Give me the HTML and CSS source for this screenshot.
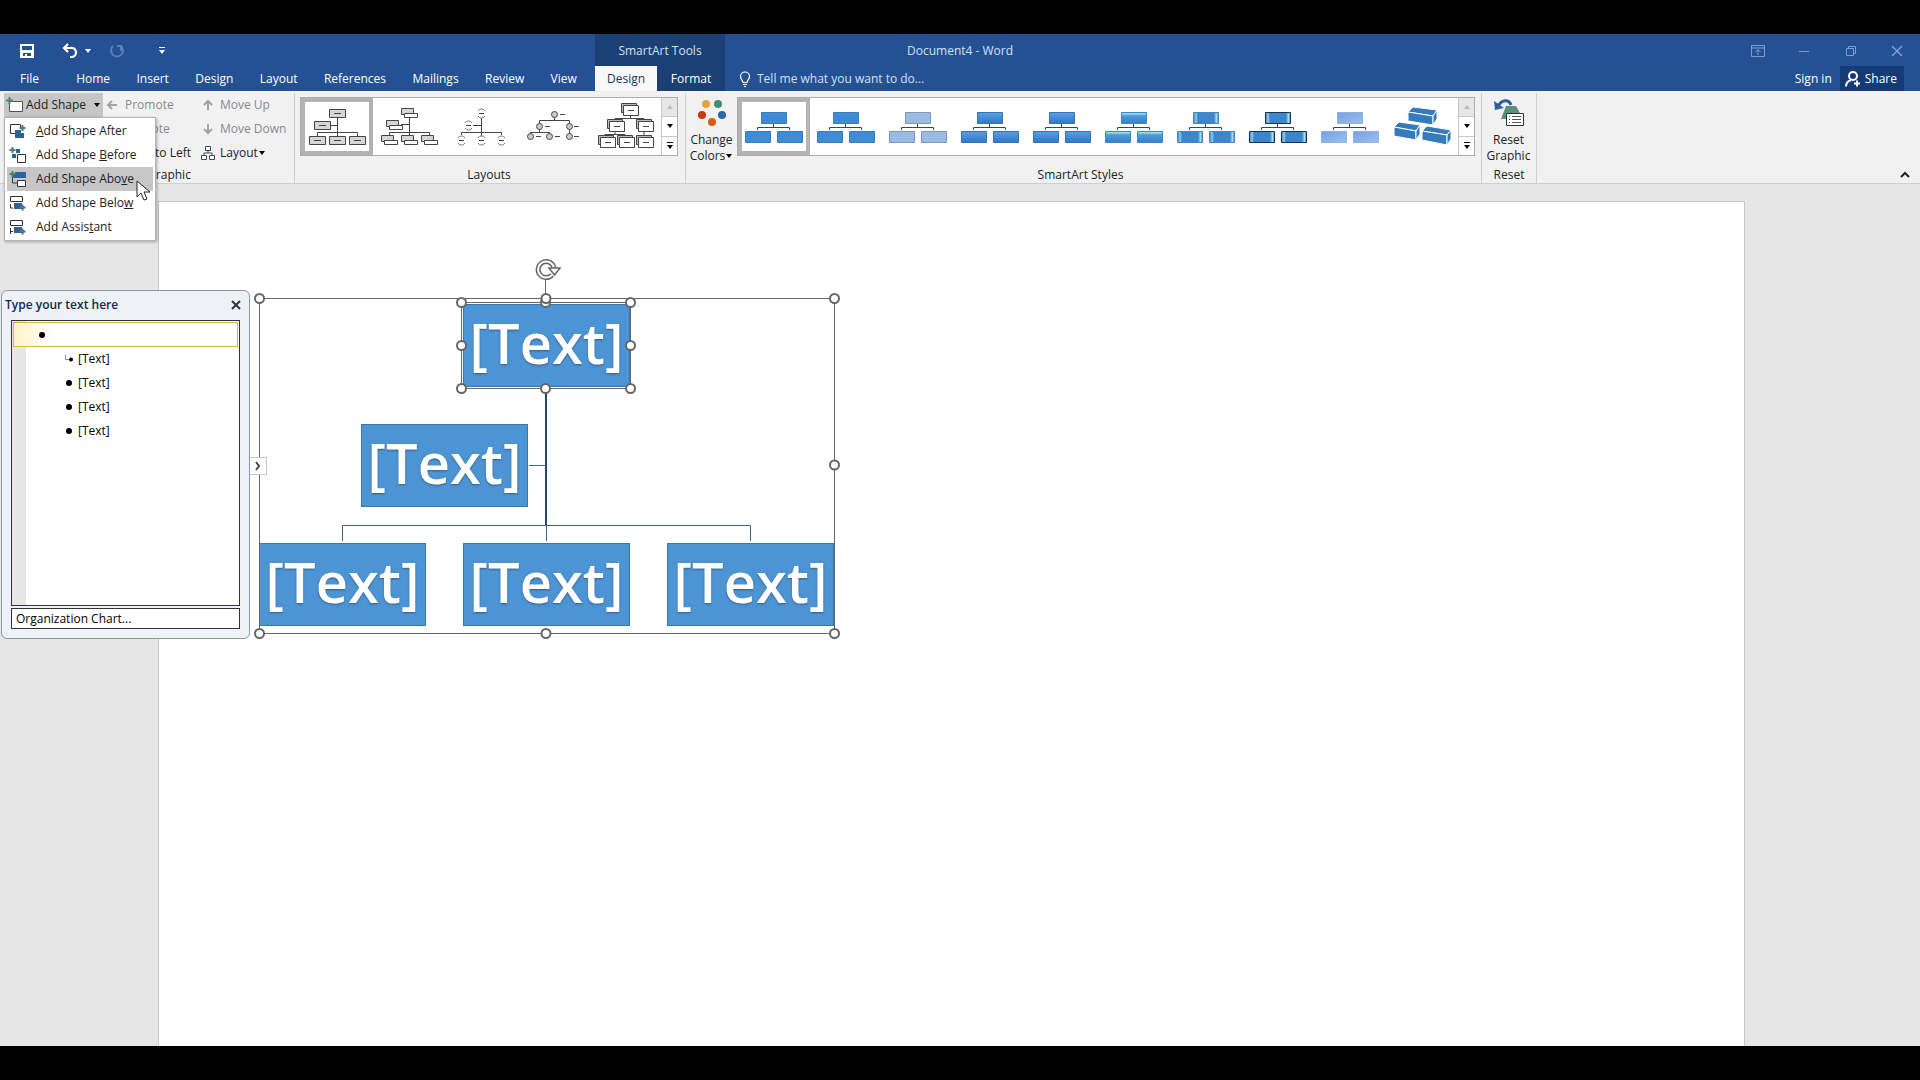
FILE: index.html
```html
<!DOCTYPE html>
<html lang="en">
<head>
<meta charset="UTF-8" />
<meta name="viewport" content="width=device-width, initial-scale=1" />
<title>Document4 - Word</title>
<link rel="stylesheet" href="styles.css">
</head>
<body>

<!-- Shared drawings -->
<svg class="defs" aria-hidden="true">
  <defs>
    <linearGradient id="blueGrad" x1="0" y1="0" x2="0" y2="1"><stop offset="0" stop-color="#5aa0e4"/><stop offset="1" stop-color="#2f78c6"/></linearGradient>
    <linearGradient id="glossGrad" x1="0" y1="0" x2="0" y2="1"><stop offset="0" stop-color="#2f86c8"/><stop offset=".1" stop-color="#a4e0f8"/><stop offset=".3" stop-color="#4b9bdc"/><stop offset="1" stop-color="#3880c8"/></linearGradient>
    <linearGradient id="insetGrad"><stop offset="0" stop-color="#3278b8"/><stop offset=".1" stop-color="#93cdf1"/><stop offset=".18" stop-color="#3b86cd"/><stop offset=".82" stop-color="#3b86cd"/><stop offset=".92" stop-color="#a5dcf8"/><stop offset="1" stop-color="#3278b8"/></linearGradient>
    <linearGradient id="softGrad" x1="0" y1="0" x2="1" y2="1"><stop offset="0" stop-color="#78a2dc"/><stop offset="1" stop-color="#9dbdf0"/></linearGradient>
    <symbol id="chart" viewBox="0 0 72 56">
      <path d="M35.500 26v3.500M19.500 32v-2.500h32v2.500" fill="none" stroke="#33475c"/>
      <path d="M23.500 14.500h25v11h-25z"/><path d="M7.500 33.500h25v11h-25z"/><path d="M39.500 33.500h25v11h-25z"/>
    </symbol>
    <symbol id="up" viewBox="0 0 8 8"><path d="M1 6h6L4 2z"/></symbol>
    <symbol id="down" viewBox="0 0 8 8"><path d="M1 2h6L4 6z"/></symbol>
    <symbol id="more" viewBox="0 0 8 8"><path d="M1 0h6v1H1zM1 3h6L4 7z"/></symbol>
  </defs>
</svg>

<header class="titlebar">
  <div class="quick">
    <button class="save" aria-label="Save"><svg width="16" height="16" viewBox="0 0 16 16"><path d="M1 1h14v14H1zM3 3v4h10V3zM4 10v3h2v-2h2v2h4v-3z" fill="#fff" fill-rule="evenodd"/></svg></button>
    <button class="undo" aria-label="Undo"><svg width="16" height="16" viewBox="0 0 16 16"><path d="M6 1L2 5l4 4M2 5h7a4.500 4.500 0 0 1 1 9H8" fill="none" stroke="#fff" stroke-width="2.200"/></svg><svg width="8" height="8" fill="#fff"><use href="#down"/></svg></button>
    <button class="redo" aria-label="Repeat"><svg width="16" height="16" viewBox="0 0 16 16"><path d="M4 3a6 6 0 1 0 8 0M12 8V3h-4" fill="none" stroke="#5c7fb8" stroke-width="2"/></svg></button>
    <button class="customize" aria-label="Customize"><svg width="8" height="8" fill="#fff"><use href="#more"/></svg></button>
  </div>
  <div class="context">SmartArt Tools</div>
  <h1>Document4 - Word</h1>
  <div class="window-buttons">
    <button aria-label="Ribbon options"><svg width="14" height="12" viewBox="0 0 14 12"><path d="M.5.5h13v11H.5zM.5 3h13M7 10V5M4.500 7L7 4.500 9.500 7"/></svg></button>
    <button aria-label="Minimize"><svg width="14" height="12" viewBox="0 0 14 12"><path d="M2 6.500h10"/></svg></button>
    <button aria-label="Restore"><svg width="14" height="12" viewBox="0 0 14 12"><path d="M2.500 3.500h7v7h-7zM4.500 3V1.500h7v7H10"/></svg></button>
    <button aria-label="Close"><svg width="14" height="12" viewBox="0 0 14 12"><path d="M2 1l10 10M12 1L2 11" stroke-width="1.500"/></svg></button>
  </div>
</header>

<nav class="tabs">
  <div class="main-tabs">
    <button class="tab file">File</button>
    <button class="tab">Home</button>
    <button class="tab">Insert</button>
    <button class="tab">Design</button>
    <button class="tab">Layout</button>
    <button class="tab">References</button>
    <button class="tab">Mailings</button>
    <button class="tab">Review</button>
    <button class="tab">View</button>
  </div>
  <div class="context-tabs">
    <button class="tab active">Design</button>
    <button class="tab">Format</button>
  </div>
  <label class="tell">
    <svg width="12" height="16" viewBox="0 0 12 16"><path d="M4 11.500c0-2-2.500-3-2.500-6a4.500 4.500 0 0 1 9 0c0 3-2.500 4-2.500 6zM4 13.500h4M5 15.500h2" fill="none" stroke="#fff" stroke-width="1.200"/></svg>
    <input type="text" placeholder="Tell me what you want to do..." aria-label="Tell me what you want to do">
  </label>
  <a class="signin" href="#">Sign in</a>
  <button class="share"><svg width="16" height="16" viewBox="0 0 16 16"><circle cx="8" cy="5" r="4"/><path d="M1 15.500c0-4 2-5.500 5-6.500M12 9.500v6M9 12.500h6"/></svg>Share</button>
</nav>

<section class="ribbon">
  <div class="group create">
    <div class="group-body create-grid">
      <div class="dropdown">
        <button class="cmd add-shape"><svg width="18" height="16" viewBox="0 0 18 16"><path d="M3.500 4.500h13v10h-13z" fill="#fff" stroke="#555"/><path d="M3.500 0v7M0 3.500h7" stroke="#4a8a73" stroke-width="2"/></svg><span>Add Shape</span><svg class="caret" width="8" height="8"><use href="#down"/></svg></button>
        <ul class="menu">
          <li><button><svg width="18" height="16" viewBox="0 0 18 16"><path d="M8 10.500H1.500v-9h10V6" fill="none" stroke="#333"/><path d="M6 7h6v3h3v5H6z" fill="#2e6399"/><path d="M13.500 2v6M10.500 5h6" stroke="#4a7f80" stroke-width="2"/></svg><span><u>A</u>dd Shape After</span></button></li>
          <li><button><svg width="18" height="16" viewBox="0 0 18 16"><path d="M7 2h4v4H7zM3 7h4v4H3z" fill="#2e6399"/><path d="M8.500 7.500h8v8h-8z" fill="#fff" stroke="#333"/><path d="M3.500 0v6M.5 3h6" stroke="#4a7f80" stroke-width="2"/></svg><span>Add Shape <u>B</u>efore</span></button></li>
          <li><button class="hover"><svg width="18" height="16" viewBox="0 0 18 16"><path d="M6 1h11v6H3V4h3z" fill="#2e6399"/><path d="M3.500 7v5H8" fill="none" stroke="#333"/><path d="M8.500 9.500h8v6h-8z" fill="#fff" stroke="#333"/><path d="M3.500 0v6M.5 3h6" stroke="#4a7f80" stroke-width="2"/></svg><span>Add Shape Abo<u>v</u>e</span></button></li>
          <li><button><svg width="18" height="16" viewBox="0 0 18 16"><path d="M1.500 1.500h12v5h-12zM1.500 9v4H4" fill="#fff" stroke="#333"/><path d="M5 8h8v3h2v3H5z" fill="#2e6399"/><path d="M13.500 9.500v6M10.500 12.500h6" stroke="#4a7f80" stroke-width="2"/></svg><span>Add Shape Belo<u>w</u></span></button></li>
          <li><button><svg width="18" height="16" viewBox="0 0 18 16"><path d="M1.500 1.500h12v5h-12zM1.500 9v6M1.500 12.500H4" fill="#fff" stroke="#333"/><path d="M5 8h8v3h2v3H5z" fill="#2e6399"/><path d="M13.500 9.500v6M10.500 12.500h6" stroke="#4a7f80" stroke-width="2"/></svg><span>Add Assis<u>t</u>ant</span></button></li>
        </ul>
      </div>
      <button class="cmd" disabled><svg width="16" height="12" viewBox="0 0 16 12"><path d="M3 6h9M7 2L3 6l4 4" fill="none" stroke="#a3a3a3" stroke-width="2"/></svg>Promote</button>
      <button class="cmd" disabled><svg width="16" height="12" viewBox="0 0 16 12"><path d="M8 11V2M4 6l4-4 4 4" fill="none" stroke="#a3a3a3" stroke-width="2"/></svg>Move Up</button>
      <button class="cmd" disabled><svg width="16" height="12" viewBox="0 0 16 12"><path d="M3 6h9M8 2l4 4-4 4" fill="none" stroke="#a3a3a3" stroke-width="2"/></svg>Demote</button>
      <button class="cmd" disabled><svg width="16" height="12" viewBox="0 0 16 12"><path d="M8 1v9M4 6l4 4 4-4" fill="none" stroke="#a3a3a3" stroke-width="2"/></svg>Move Down</button>
      <button class="cmd rtl">Right to Left</button>
      <button class="cmd"><svg width="16" height="16" viewBox="0 0 16 16"><path d="M5.500 1.500h5v4h-5zM1.500 10.500h5v4h-5zM9.500 10.500h5v4h-5zM8 6v2M4 10V8h8v2" fill="#fff" stroke="#3c4a58"/></svg><span>Layout<svg class="caret" width="8" height="8"><use href="#down"/></svg></span></button>
    </div>
    <div class="group-label">Create Graphic</div>
  </div>

  <div class="group layouts">
    <div class="group-body">
      <div class="gallery">
        <button class="thumb selected" aria-label="Organization Chart"><svg viewBox="0 0 72 56"><path d="M36.500 19v19M30 27.500h6M16.500 38v-3.500h40V38" /><path fill="#d6d6d6" d="M28.500 11.500h16v8h-16zM13.500 23.500h16v8h-16zM8.500 38.500h16v8h-16zM28.500 38.500h16v8h-16zM48.500 38.500h16v8h-16z"/><path d="M33 15.500h7M18 27.500h7M13 42.500h7M33 42.500h7M53 42.500h7"/></svg></button>
        <button class="thumb" aria-label="Name and Title Organization Chart"><svg viewBox="0 0 72 56"><path d="M36.500 18v20M28 26.500h8M16.500 38v-3.500h40V38"/><path fill="#d6d6d6" d="M28.500 10.500h12v6h-12zM13.500 22.500h12v6h-12zM8.500 37.500h12v6h-12zM28.500 37.500h12v6h-12zM48.500 37.500h12v6h-12z"/><path fill="#fff" d="M31.500 15.500h13v4h-13zM16.500 27.500h13v4h-13zM11.500 42.500h13v4h-13zM31.500 42.500h13v4h-13zM51.500 42.500h13v4h-13z"/></svg></button>
        <button class="thumb" aria-label="Half Circle Organization Chart"><svg viewBox="0 0 72 56"><path d="M36.500 20v18M28 27.500h8M16.500 37v-2.500h40V37"/><path stroke="#777" d="M33 13a4 4 0 0 1 7 0M33 18a4 4 0 0 0 7 0M20 25a4 4 0 0 1 7 0M20 30a4 4 0 0 0 7 0M13 40a4 4 0 0 1 7 0M13 45a4 4 0 0 0 7 0M33 40a4 4 0 0 1 7 0M33 45a4 4 0 0 0 7 0M53 40a4 4 0 0 1 7 0M53 45a4 4 0 0 0 7 0"/><path d="M34 15.500h5M21 27.500h5M14 42.500h5M34 42.500h5M54 42.500h5"/></svg></button>
        <button class="thumb" aria-label="Circle Picture Hierarchy"><svg viewBox="0 0 72 56"><path d="M37.500 19v3.500M22.500 26v-3.500h30V26M22.500 31v4M13.500 37v-2.500h19V37M52.500 31v6M43 16.500h5M28 28.500h5M57 28.500h5M19 38.500h5M38 38.500h5M57 38.500h5"/><g fill="#ccc"><circle cx="37.500" cy="16.500" r="3"/><circle cx="22.500" cy="28.500" r="3"/><circle cx="52.500" cy="28.500" r="3"/><circle cx="13.500" cy="38.500" r="3"/><circle cx="32.500" cy="38.500" r="3"/><circle cx="52.500" cy="38.500" r="3"/></g></svg></button>
        <button class="thumb" aria-label="Hierarchy"><svg viewBox="0 0 72 56"><path d="M41.500 17v3.500M26 23v-2.500h29V23M26 33v3.500M16 38v-1.500h20V38M55 33v5"/><path fill="#bbb" d="M32.500 5.500h15v9h-15zM18.500 21.500h15v9h-15zM47.500 21.500h15v9h-15zM9.500 37.500h15v9h-15zM28.500 37.500h15v9h-15zM47.500 37.500h15v9h-15z"/><path fill="#fff" d="M34.500 7.500h15v10h-15zM20.500 23.500h15v10h-15zM49.500 23.500h15v10h-15zM11.500 39.500h15v10h-15zM30.500 39.500h15v10h-15zM49.500 39.500h15v10h-15z"/><path d="M39 12.500h6M25 28.500h6M54 28.500h6M16 44.500h6M35 44.500h6M54 44.500h6"/></svg></button>
        <div class="scroll">
          <button disabled aria-label="Previous row"><svg width="8" height="8"><use href="#up"/></svg></button>
          <button aria-label="Next row"><svg width="8" height="8"><use href="#down"/></svg></button>
          <button aria-label="More layouts"><svg width="8" height="8"><use href="#more"/></svg></button>
        </div>
      </div>
    </div>
    <div class="group-label">Layouts</div>
  </div>

  <div class="group styles">
    <div class="group-body">
      <button class="big colors">
        <svg width="30" height="30" viewBox="0 0 30 30"><circle cx="9" cy="6" r="4" fill="#e6a23c"/><circle cx="21" cy="6" r="4" fill="#3f8f73"/><circle cx="5" cy="17" r="4" fill="#c8381c"/><circle cx="25" cy="17" r="4" fill="#2b66a5"/><circle cx="15" cy="24" r="4" fill="#d95c10"/></svg>
        <span>Change<br>Colors<svg class="caret" width="8" height="8"><use href="#down"/></svg></span>
      </button>
      <div class="gallery">
        <button class="thumb selected" aria-label="Simple Fill"><svg class="flat" viewBox="0 0 72 56"><use href="#chart"/></svg></button>
        <button class="thumb" aria-label="White Outline"><svg class="flat" viewBox="0 0 72 56"><use href="#chart"/></svg></button>
        <button class="thumb" aria-label="Subtle Effect"><svg class="pale" viewBox="0 0 72 56"><use href="#chart"/></svg></button>
        <button class="thumb" aria-label="Moderate Effect"><svg class="grad" viewBox="0 0 72 56"><use href="#chart"/></svg></button>
        <button class="thumb" aria-label="Intense Effect"><svg class="grad" viewBox="0 0 72 56"><use href="#chart"/></svg></button>
        <button class="thumb" aria-label="Polished"><svg class="gloss" viewBox="0 0 72 56"><use href="#chart"/></svg></button>
        <button class="thumb" aria-label="Inset"><svg class="inset" viewBox="0 0 72 56"><use href="#chart"/></svg></button>
        <button class="thumb" aria-label="Cartoon"><svg class="inset cartoon" viewBox="0 0 72 56"><use href="#chart"/></svg></button>
        <button class="thumb" aria-label="Powder"><svg class="soft" viewBox="0 0 72 56"><use href="#chart"/></svg></button>
        <button class="thumb" aria-label="Brick Scene"><svg viewBox="0 0 72 56">
          <g class="brick"><path d="M22 14l5-5 24 3-4 6z"/><path d="M22 14l25 4v9l-25-4z"/><path d="M47 18l4-6v9l-4 6z"/></g>
          <g class="brick"><path d="M8 29l5-5 21 3-4 6z"/><path d="M8 29l22 4v9L8 38z"/><path d="M30 33l4-6v9l-4 6z"/></g>
          <g class="brick"><path d="M36 33l5-5 24 4-4 5z"/><path d="M36 33l25 4v10l-25-5z"/><path d="M61 37l4-5v9l-4 6z"/></g>
        </svg></button>
        <div class="scroll">
          <button disabled aria-label="Previous row"><svg width="8" height="8"><use href="#up"/></svg></button>
          <button aria-label="Next row"><svg width="8" height="8"><use href="#down"/></svg></button>
          <button aria-label="More styles"><svg width="8" height="8"><use href="#more"/></svg></button>
        </div>
      </div>
    </div>
    <div class="group-label">SmartArt Styles</div>
  </div>

  <div class="group reset">
    <div class="group-body">
      <button class="big">
        <svg width="30" height="30" viewBox="0 0 30 30"><path d="M12 8h10l5 9v4H7z" fill="#55917c"/><path d="M12.500 15.500h17v12h-17z" fill="#fff" stroke="#333"/><path d="M15 18.500h1M15 21.500h1M15 24.500h1M18 18.500h9M18 21.500h9M18 24.500h9" stroke="#555"/><path d="M17 7c-2-6-10-6-13 2" fill="none" stroke="#2b5f9e" stroke-width="3"/><path d="M0 3l1 9 9-2z" fill="#2b5f9e"/></svg>
        <span>Reset<br>Graphic</span>
      </button>
    </div>
    <div class="group-label">Reset</div>
  </div>

  <button class="collapse" aria-label="Collapse the Ribbon"><svg width="10" height="8" viewBox="0 0 10 8"><path d="M1 6l4-4 4 4" fill="none" stroke="#222" stroke-width="2"/></svg></button>
</section>

<main class="workspace">
  <div class="page"></div>

  <div class="smartart">
    <svg class="links" viewBox="0 0 576 336" aria-hidden="true">
      <path d="M287 91v136" stroke="#24466a" stroke-width="2"/>
      <path d="M270 167.500h17M83.500 243v-15.500h408V243M287.500 227v16" stroke="#3f668a" fill="none"/>
    </svg>
    <div class="node top">[Text]</div>
    <div class="node assistant">[Text]</div>
    <div class="node first">[Text]</div>
    <div class="node second">[Text]</div>
    <div class="node third">[Text]</div>
    <svg class="handles" viewBox="0 0 576 336" aria-hidden="true">
      <path d="M.5.5h575v335H.5zM202.500 4.500h169v86h-169zM286.500-18V0"/>
      <g fill="#fff" stroke-width="2">
        <circle cx="286.500" cy="4.500" r="4.500"/>
        <circle cx=".5" cy=".5" r="4.500"/><circle cx="287" cy=".5" r="4.500"/><circle cx="575.500" cy=".5" r="4.500"/>
        <circle cx="575.500" cy="167" r="4.500"/>
        <circle cx=".5" cy="335.500" r="4.500"/><circle cx="287" cy="335.500" r="4.500"/><circle cx="575.500" cy="335.500" r="4.500"/>
        <circle cx="202.500" cy="4.500" r="4.500"/><circle cx="371.500" cy="4.500" r="4.500"/>
        <circle cx="202.500" cy="47.500" r="4.500"/><circle cx="371.500" cy="47.500" r="4.500"/>
        <circle cx="202.500" cy="90.500" r="4.500"/><circle cx="286.500" cy="90.500" r="4.500"/><circle cx="371.500" cy="90.500" r="4.500"/>
      </g>
      <!-- rotate -->
      <path d="M293-23a8 8 0 1 1 2-7" stroke-width="5"/>
      <path d="M293-23a8 8 0 1 1 2-7" stroke="#fff" stroke-width="2"/>
      <path d="M290-30h11l-5.500 7z" fill="#fff" stroke-width="1.500"/>
    </svg>
    <button class="toggle" aria-label="Text pane"><svg width="6" height="10" viewBox="0 0 6 10"><path d="M1 1l3 4-3 4" fill="none" stroke="#444" stroke-width="2"/></svg></button>
  </div>

  <aside class="text-pane">
    <div class="pane-head">
      <h2>Type your text here</h2>
      <button aria-label="Close"><svg width="10" height="10" viewBox="0 0 10 10"><path d="M1 1l8 8M9 1L1 9" stroke="#333" stroke-width="2"/></svg></button>
    </div>
    <ul class="outline">
      <li class="current"><i class="dot"></i></li>
      <li><svg width="8" height="8" viewBox="0 0 8 8"><path d="M.5 0v4.500H5" fill="none" stroke="#888"/><circle cx="6" cy="4.500" r="2"/></svg>[Text]</li>
      <li><i class="dot"></i>[Text]</li>
      <li><i class="dot"></i>[Text]</li>
      <li><i class="dot"></i>[Text]</li>
    </ul>
    <button class="pane-foot">Organization Chart...</button>
  </aside>
</main>

<svg class="cursor" width="16" height="22" viewBox="0 0 16 22" aria-hidden="true"><path d="M1 1v16l4-4 3 7 3-1-3-7h6z" fill="#fff" stroke="#222"/></svg>

</body>
</html>
```

FILE: styles.css
```css
* {
  box-sizing: border-box;
}
body {
  display: flex;
  flex-direction: column;
  height: 100vh;
  margin: 0;
  padding: 34px 0;
  overflow: hidden;
  background: #000;
  color: #222;
  font-family: "Open Sans", "Noto Sans", sans-serif;
  font-size: 12px;
  line-height: 16px;
}
button, input {
  margin: 0;
  padding: 0;
  border: none;
  background: none;
  color: inherit;
  font: inherit;
}
h1, h2, ul {
  margin: 0;
  padding: 0;
  list-style: none;
}
svg {
  display: block;
  flex: none;
}
.defs {
  position: absolute;
  width: 0;
  height: 0;
}

/* Title bar */
.titlebar {
  display: grid;
  grid-template-columns: 595px 130px 1fr 180px;
  flex: none;
  height: 32px;
  background: #255094;
  color: #d3e0f5;
}
.quick {
  display: flex;
  align-items: center;
  padding-left: 19px;
}
.quick button {
  display: flex;
  align-items: center;
  gap: 6px;
}
.undo {
  margin-left: 27px;
}
.redo {
  margin-left: 17px;
}
.customize {
  margin-left: 33px;
}
.context {
  background: #1c3f74;
  text-align: center;
  line-height: 34px;
}
.titlebar h1 {
  padding-left: 182px;
  font-size: 12px;
  font-weight: normal;
  line-height: 34px;
}
.window-buttons {
  display: flex;
  align-items: center;
  justify-content: space-between;
  padding: 0 16px 0 11px;
}
.window-buttons svg {
  fill: none;
  stroke: #7f9dd0;
}

/* Tabs */
.tabs {
  display: flex;
  flex: none;
  height: 25px;
  background: #255094;
  color: #fff;
}
.main-tabs {
  display: flex;
  width: 595px;
  padding-right: 5px;
}
.tab {
  flex-grow: 1;
  padding: 0 13px;
}
.tab.file {
  flex-grow: 0;
  padding: 0 24px 0 20px;
}
.context-tabs {
  display: flex;
  width: 130px;
  background: #1c3f74;
}
.context-tabs .tab {
  padding: 0 12px;
}
.context-tabs .active {
  flex-grow: 0;
  background: #f8f8f8;
  color: #1b355f;
}
.tell {
  display: flex;
  flex: 1;
  align-items: center;
  gap: 6px;
  padding-left: 14px;
}
.tell input {
  width: 240px;
}
.tell input::placeholder {
  color: #d3e0f5;
  opacity: 1;
}
.signin {
  color: #fff;
  line-height: 25px;
  text-decoration: none;
}
.share {
  display: flex;
  align-items: center;
  gap: 4px;
  margin: 0 16px 0 8px;
  padding: 0 7px 0 5px;
  background: #163a75;
}
.share svg {
  fill: none;
  stroke: #fff;
  stroke-width: 2;
}

/* Ribbon */
.ribbon {
  display: flex;
  flex: none;
  height: 93px;
  padding: 2px 0 0;
  border-bottom: 1px solid #cfcfcf;
  background: #f1f1f1;
}
.group {
  display: flex;
  flex-direction: column;
  border-right: 1px solid #cfcfcf;
}
.group-body {
  display: flex;
  flex: 1;
}
.group-label {
  height: 16px;
  text-align: center;
}
.caret {
  display: inline-block;
}
.create {
  width: 295px;
  padding-left: 4px;
}
.create-grid {
  display: grid;
  grid-template-columns: 99px 95px 1fr;
  grid-template-rows: repeat(3, 24px);
}
.cmd {
  display: flex;
  align-items: center;
  gap: 4px;
  padding: 0 2px;
  text-align: left;
  white-space: nowrap;
}
.cmd:disabled {
  color: #8a8a8a;
}
.dropdown {
  position: relative;
  z-index: 5;
  grid-row: span 3;
}
.add-shape {
  gap: 2px;
  width: 100%;
  height: 24px;
  background: #c6c6c6;
}
.add-shape .caret {
  margin-left: auto;
}
.rtl {
  justify-content: flex-end;
  padding-right: 7px;
}
.menu {
  position: absolute;
  top: 24px;
  left: 0;
  width: 152px;
  padding: 1px 2px;
  border: 1px solid #b4b4b4;
  background: #fff;
  box-shadow: 1px 1px 3px rgba(0, 0, 0, 0.3);
}
.menu button {
  display: flex;
  align-items: center;
  gap: 9px;
  width: 100%;
  height: 24px;
  padding-left: 2px;
}
.menu .hover {
  background: #c6c6c6;
}
.layouts {
  padding-left: 5px;
  padding-right: 7px;
}
.gallery {
  display: flex;
  height: 59px;
  margin-top: 4px;
  border: 1px solid #ababab;
  background: #fff;
}
.thumb {
  display: flex;
  width: 72px;
  height: 57px;
}
.thumb svg {
  width: 72px;
  height: 56px;
}
.thumb.selected {
  box-shadow: inset 0 0 0 4px #b3b3b3;
}
.layouts .thumb svg {
  fill: none;
  stroke: #444;
}
.flat {
  fill: #3f8cd6;
  stroke: #3a7cba;
}
.pale {
  fill: #9dbbe2;
  stroke: #7d97bb;
}
.grad {
  fill: url(#blueGrad);
  stroke: #3474b4;
}
.gloss {
  fill: url(#glossGrad);
  stroke: #3a86c6;
}
.inset {
  fill: url(#insetGrad);
  stroke: #4285bd;
}
.cartoon {
  stroke: #17334d;
}
.soft {
  fill: url(#softGrad);
  stroke: #8fb0e2;
}
.brick {
  fill: #347abd;
  stroke: #fff;
  stroke-linejoin: round;
}
.scroll {
  display: flex;
  flex-direction: column;
  width: 16px;
  border-left: 1px solid #c6c6c6;
}
.scroll button {
  display: flex;
  flex: 1;
  align-items: center;
  justify-content: center;
}
.scroll button + button {
  border-top: 1px solid #c6c6c6;
}
.scroll button:disabled {
  background: #e6e6e6;
  fill: #bbb;
}
.big {
  display: flex;
  flex-direction: column;
  align-items: center;
  width: 53px;
  padding-top: 5px;
}
.big span {
  margin-top: 4px;
}
.colors {
  width: 51px;
}
.styles {
  padding-right: 6px;
}
.reset {
  width: 55px;
}
.collapse {
  align-self: flex-end;
  margin: 0 10px 4px auto;
}

/* Document */
.workspace {
  position: relative;
  display: flex;
  flex: 1;
  padding: 17px 175px 0 158px;
  background: #e6e6e6;
}
.page {
  flex: 1;
  border: 1px solid #c6c6c6;
  border-bottom: none;
  background: #fff;
}

/* SmartArt canvas, nodes are placed freely on it */
.smartart {
  position: absolute;
  top: 114px;
  left: 259px;
  width: 576px;
  height: 336px;
}
.links, .handles {
  position: absolute;
  inset: 0;
  width: 576px;
  height: 336px;
  overflow: visible;
}
.handles {
  fill: none;
  stroke: #666;
}
.node {
  position: absolute;
  width: 167px;
  height: 83px;
  border: 1px solid #3b76ab;
  background: #4d94d4;
  color: #fff;
  font-size: 56px;
  font-weight: 600;
  line-height: 74px;
  text-align: center;
  text-shadow: 0 1px 2px rgba(40, 70, 100, 0.7);
}
.top {
  top: 6px;
  left: 204px;
}
.assistant {
  top: 126px;
  left: 102px;
}
.first {
  top: 245px;
  left: 0;
}
.second {
  top: 245px;
  left: 204px;
}
.third {
  top: 245px;
  left: 408px;
}
.toggle {
  position: absolute;
  top: 159px;
  left: -10px;
  display: flex;
  align-items: center;
  justify-content: center;
  width: 18px;
  height: 18px;
  border: 1px solid #c6c6c6;
  background: #fff;
}

/* Text pane */
.text-pane {
  position: absolute;
  top: 106px;
  left: 1px;
  display: flex;
  flex-direction: column;
  gap: 2px;
  width: 249px;
  height: 349px;
  padding: 0 9px 9px;
  border: 1px solid #8b98a5;
  border-radius: 6px;
  background: #eef1f6;
}
.pane-head {
  display: flex;
  align-items: center;
  justify-content: space-between;
  height: 27px;
  margin-left: -6px;
}
.pane-head button {
  width: 10px;
  margin-right: -1px;
}
.pane-head h2 {
  color: #14284b;
  font-size: 12px;
  font-weight: 600;
}
.outline {
  flex: 1;
  padding: 1px;
  border: 1px solid #333;
  background: linear-gradient(90deg, #e6e6e6 14px, #fff 14px);
  color: #000;
}
.outline li {
  display: flex;
  align-items: center;
  gap: 5px;
  height: 24px;
  padding-left: 52px;
}
.outline svg {
  width: 8px;
  height: 8px;
}
.outline .current {
  height: 25px;
  padding-left: 24px;
  border: 1px solid #d9b44a;
  background: linear-gradient(90deg, #fff3c4, #fff 40px);
}
.dot {
  width: 6px;
  height: 6px;
  margin: 1px;
  border-radius: 50%;
  background: #000;
}
.pane-foot {
  height: 21px;
  padding-left: 4px;
  border: 1px solid #333;
  background: #fff;
  color: #000;
  font-weight: 500;
  text-align: left;
}
.cursor {
  position: absolute;
  top: 180px;
  left: 136px;
  z-index: 10;
}
```
